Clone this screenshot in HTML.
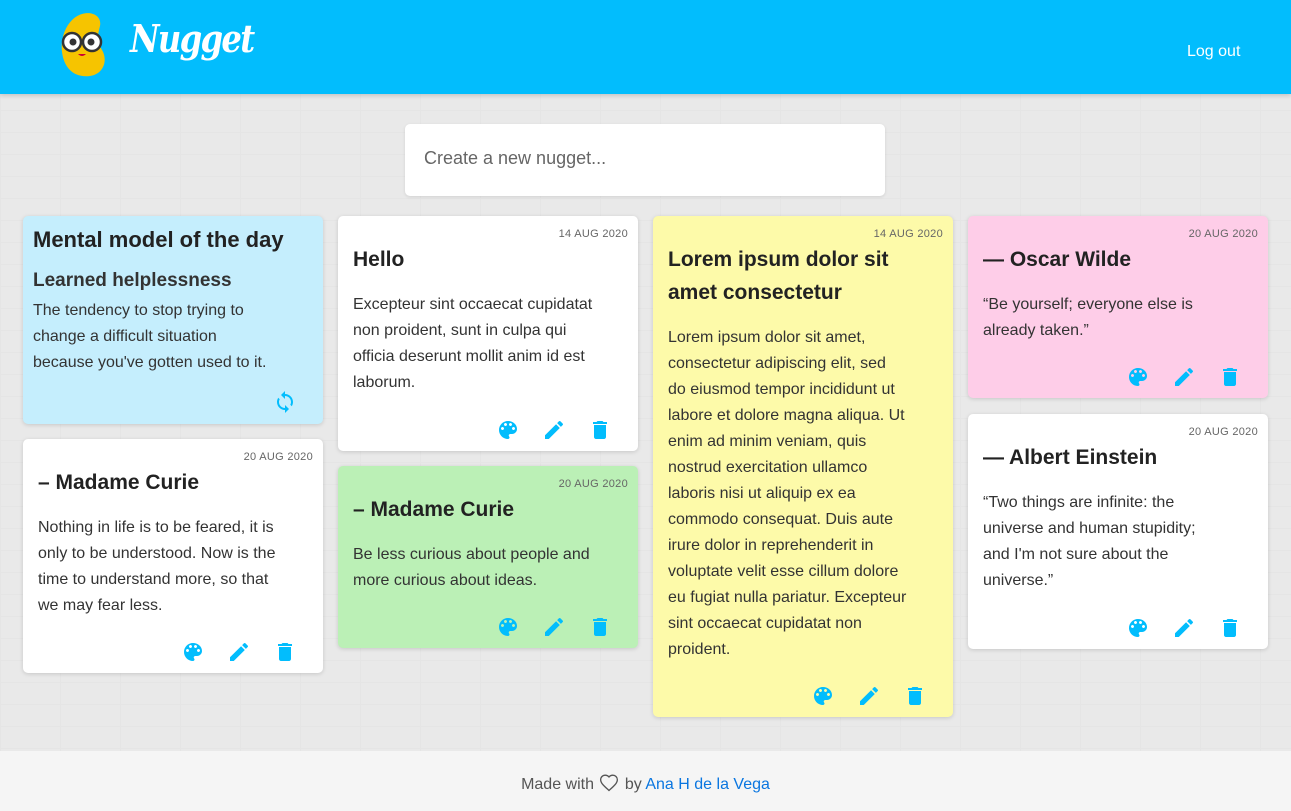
<!DOCTYPE html>
<html><head><meta charset="utf-8"><style>
*{box-sizing:border-box;margin:0;padding:0}
body{width:1291px;height:811px;overflow:hidden;background:#e9e9e9;font-family:"Liberation Sans",sans-serif;color:#222;position:relative;
background-image:linear-gradient(#e5e5e5 1px,transparent 1px),linear-gradient(90deg,#e5e5e5 1px,transparent 1px);background-size:60px 22px}
.hdr{position:absolute;left:0;top:0;width:1291px;height:94px;background:#02bdfd;box-shadow:0 2px 4px rgba(0,0,0,.15)}
.logo{position:absolute;left:130px;top:16px;color:#fff;font:italic bold 38px "DejaVu Serif",serif;letter-spacing:-2px;transform:scaleX(.85);transform-origin:left}
.logout{position:absolute;left:1187px;top:43px;color:#fff;font-size:16px}
.inp{position:absolute;left:405px;top:124px;width:480px;height:72px;background:#fff;border-radius:5px;box-shadow:0 1px 3px rgba(0,0,0,.1);padding:24px 19px;font-size:18px;color:#666}
.c{position:absolute;width:300px;border-radius:5px;box-shadow:0 1px 4px rgba(0,0,0,.15);background:#fff;padding:15px;white-space:nowrap}
.d{position:absolute;right:10px;top:12px;font-size:11px;color:#666;letter-spacing:.3px}
.t{font-size:21px;font-weight:bold;line-height:33px;margin-top:12px}
.b{font-size:16px;line-height:26px;margin-top:16px;color:#333}
.ic{position:absolute;right:26px;bottom:9px;display:flex;gap:22px}
.ic svg{width:24px;height:24px;fill:#02bdfd}
.ft{position:absolute;left:0;top:751px;width:1291px;height:60px;background:#f5f5f5;text-align:center;font-size:16px;color:#555;padding-top:22px}
</style></head><body>
<div class="hdr">
<svg style="position:absolute;left:60px;top:12px" width="52" height="66" viewBox="0 0 52 66"><path d="M22 2c10-3 20 2 18 12-2 8-4 14 2 24 6 10 2 24-12 26C14 66 4 56 2 40 0 24 8 6 22 2z" fill="#f6c400"/><circle cx="12" cy="30" r="9" fill="#fff" stroke="#333" stroke-width="2.5"/><circle cx="32" cy="30" r="9" fill="#fff" stroke="#333" stroke-width="2.5"/><line x1="21" y1="30" x2="23" y2="30" stroke="#333" stroke-width="2.5"/><circle cx="13" cy="30" r="3.5" fill="#333"/><circle cx="31" cy="30" r="3.5" fill="#333"/><path d="M18 42q4 4 8 0z" fill="#c03"/></svg>
<div class="logo">Nugget</div>
<div class="logout">Log out</div>
</div>
<div class="inp">Create a new nugget...</div>

<div class="c" style="left:23px;top:216px;height:208px;background:#c5eefd;padding:10px">
<div style="font-size:22px;font-weight:bold;line-height:28px;margin-top:0">Mental model of the day</div>
<div style="font-size:19px;font-weight:bold;line-height:26px;margin-top:14px;color:#333">Learned helplessness</div>
<div class="b" style="margin-top:4px">The tendency to stop trying to<br>change a difficult situation<br>because you've gotten used to it.</div>
<svg style="position:absolute;right:26px;bottom:10px;width:24px;height:24px;fill:#02bdfd" viewBox="0 0 24 24"><path d="M12 4V1L8 5l4 4V6c3.31 0 6 2.69 6 6 0 1.01-.25 1.970-.7 2.8l1.46 1.46C19.54 15.03 20 13.57 20 12c0-4.42-3.58-8-8-8zm0 14c-3.31 0-6-2.69-6-6 0-1.01.25-1.970.7-2.8L5.24 7.74C4.46 8.97 4 10.43 4 12c0 4.42 3.58 8 8 8v3l4-4-4-4v3z"/></svg>
</div>

<div class="c" style="left:23px;top:439px;height:234px"><div class="d">20 AUG 2020</div>
<div class="t">– Madame Curie</div>
<div class="b">Nothing in life is to be feared, it is<br>only to be understood. Now is the<br>time to understand more, so that<br>we may fear less.</div>
ICONS</div>

<div class="c" style="left:338px;top:216px;height:235px"><div class="d">14 AUG 2020</div>
<div class="t">Hello</div>
<div class="b">Excepteur sint occaecat cupidatat<br>non proident, sunt in culpa qui<br>officia deserunt mollit anim id est<br>laborum.</div>
ICONS</div>

<div class="c" style="left:338px;top:466px;height:182px;background:#bbf0b6"><div class="d">20 AUG 2020</div>
<div class="t">– Madame Curie</div>
<div class="b">Be less curious about people and<br>more curious about ideas.</div>
ICONS</div>

<div class="c" style="left:653px;top:216px;height:501px;background:#fdfaa9"><div class="d">14 AUG 2020</div>
<div class="t">Lorem ipsum dolor sit<br>amet consectetur</div>
<div class="b">Lorem ipsum dolor sit amet,<br>consectetur adipiscing elit, sed<br>do eiusmod tempor incididunt ut<br>labore et dolore magna aliqua. Ut<br>enim ad minim veniam, quis<br>nostrud exercitation ullamco<br>laboris nisi ut aliquip ex ea<br>commodo consequat. Duis aute<br>irure dolor in reprehenderit in<br>voluptate velit esse cillum dolore<br>eu fugiat nulla pariatur. Excepteur<br>sint occaecat cupidatat non<br>proident.</div>
ICONS</div>

<div class="c" style="left:968px;top:216px;height:182px;background:#fecde8"><div class="d">20 AUG 2020</div>
<div class="t">— Oscar Wilde</div>
<div class="b">“Be yourself; everyone else is<br>already taken.”</div>
ICONS</div>

<div class="c" style="left:968px;top:414px;height:235px"><div class="d">20 AUG 2020</div>
<div class="t">— Albert Einstein</div>
<div class="b">“Two things are infinite: the<br>universe and human stupidity;<br>and I'm not sure about the<br>universe.”</div>
ICONS</div>

<div class="ft">Made with <svg width="22" height="20" viewBox="0 0 24 24" style="vertical-align:-4px"><path d="M12 21l-1.4-1.3C5.4 15 2 11.9 2 8.1 2 5 4.4 2.6 7.5 2.6c1.7 0 3.4.8 4.5 2.1 1.1-1.3 2.8-2.1 4.5-2.1C19.6 2.6 22 5 22 8.1c0 3.8-3.4 6.9-8.6 11.6z" fill="none" stroke="#555" stroke-width="1.6"/></svg> by <span style="color:#0a76e0">Ana H de la Vega</span></div>

<script>
var I='<div class="ic"><svg viewBox="0 0 24 24"><path d="M12 3c-4.97 0-9 4.03-9 9s4.03 9 9 9c.83 0 1.5-.67 1.5-1.5 0-.39-.15-.74-.39-1.01-.23-.26-.38-.61-.38-.99 0-.83.67-1.5 1.5-1.5H16c2.76 0 5-2.240 5-5 0-4.42-4.03-8-9-8zm-5.5 9c-.83 0-1.5-.67-1.5-1.5S5.67 9 6.5 9 8 9.67 8 10.5 7.33 12 6.5 12zm3-4C8.67 8 8 7.33 8 6.5S8.67 5 9.5 5s1.5.67 1.5 1.5S10.33 8 9.5 8zm5 0c-.83 0-1.5-.67-1.5-1.5S13.67 5 14.5 5s1.5.67 1.5 1.5S15.33 8 14.5 8zm3 4c-.83 0-1.5-.67-1.5-1.5S16.67 9 17.5 9s1.5.67 1.5 1.5-.67 1.5-1.5 1.5z"/></svg><svg viewBox="0 0 24 24"><path d="M3 17.25V21h3.75L17.81 9.94l-3.75-3.75L3 17.25zM20.71 7.04c.39-.39.39-1.02 0-1.41l-2.34-2.340c-.39-.39-1.02-.39-1.41 0l-1.83 1.83 3.75 3.75 1.83-1.83z"/></svg><svg viewBox="0 0 24 24"><path d="M6 19c0 1.1.9 2 2 2h8c1.1 0 2-.9 2-2V7H6v12zM19 4h-3.5l-1-1h-5l-1 1H5v2h14V4z"/></svg></div>';
document.querySelectorAll('.c').forEach(function(c){c.innerHTML=c.innerHTML.replace('ICONS',I)});
</script>
</body></html>
